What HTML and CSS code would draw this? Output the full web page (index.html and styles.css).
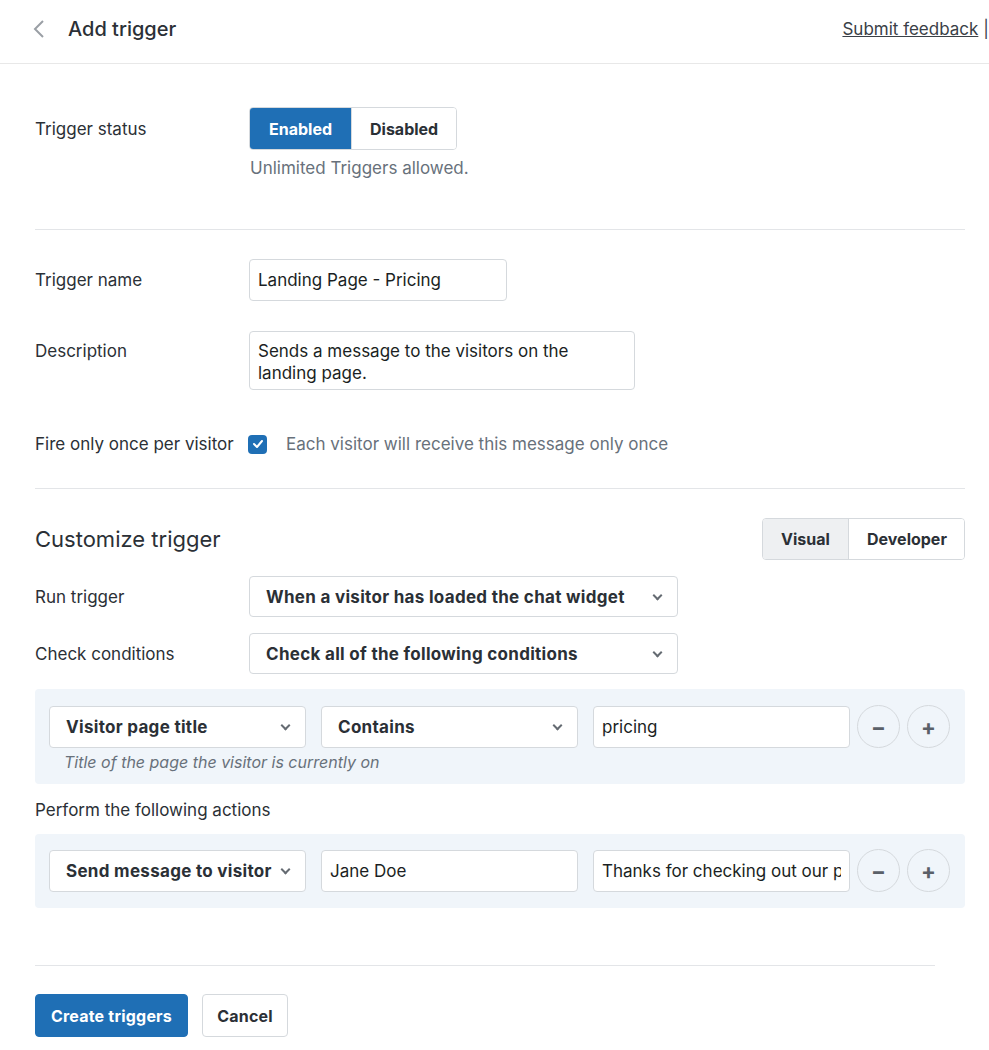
FILE: index.html
```html
<!DOCTYPE html>
<html lang="en">
<head>
    <meta charset="UTF-8">
    <meta name="viewport" content="width=device-width, initial-scale=1.0">
    <title>Add trigger</title>
    <link rel="stylesheet" href="styles.css">
</head>
<body>
<header class="topbar">
    <div class="topbar-left">
        <a class="back-link" href="#">
            <svg width="14" height="20" viewBox="0 0 14 20"><polyline points="11,2 3,10 11,18" fill="none" stroke="#9a9fa5" stroke-width="2"/></svg>
        </a>
        <h1 class="page-title">Add trigger</h1>
    </div>
    <div class="topbar-right">
        <a class="feedback-link" href="#">Submit feedback</a>
        <span class="divider">|</span>
    </div>
</header>

<main class="content">
    <section class="section section-status">
        <div class="field">
            <label class="field-label">Trigger status</label>
            <div class="btn-group">
                <button class="seg-btn seg-btn-primary">Enabled</button>
                <button class="seg-btn">Disabled</button>
            </div>
        </div>
        <div class="field-hint-row">
            <p class="hint">Unlimited Triggers allowed.</p>
        </div>
    </section>

    <section class="section section-details">
        <div class="field">
            <label class="field-label" for="trigger-name">Trigger name</label>
            <input class="text-input name-input" id="trigger-name" type="text" value="Landing Page - Pricing">
        </div>
        <div class="field field-top">
            <label class="field-label" for="description">Description</label>
            <div class="text-input textarea" id="description">Sends a message to the visitors on the landing page.</div>
        </div>
        <div class="field field-check">
            <label class="field-label">Fire only once per visitor</label>
            <div class="check-row">
                <span class="checkbox">
                    <svg width="12" height="10" viewBox="0 0 12 10"><polyline points="2,5 5,8 10,2" fill="none" stroke="#fff" stroke-width="2" stroke-linecap="round" stroke-linejoin="round"/></svg>
                </span>
                <span class="check-text">Each visitor will receive this message only once</span>
            </div>
        </div>
    </section>

    <section class="section section-customize">
        <div class="customize-head">
            <h2 class="section-title">Customize trigger</h2>
            <div class="btn-group">
                <button class="seg-btn seg-btn-small seg-btn-active">Visual</button>
                <button class="seg-btn seg-btn-small seg-btn-wide">Developer</button>
            </div>
        </div>
        <div class="field field-compact">
            <label class="field-label">Run trigger</label>
            <div class="select wide-select">When a visitor has loaded the chat widget</div>
        </div>
        <div class="field field-compact">
            <label class="field-label">Check conditions</label>
            <div class="select wide-select">Check all of the following conditions</div>
        </div>

        <div class="rule-box">
            <div class="rule-row">
                <div class="select rule-cell">Visitor page title</div>
                <div class="select rule-cell">Contains</div>
                <input class="text-input rule-cell" type="text" value="pricing">
                <button class="round-btn">&minus;</button>
                <button class="round-btn">+</button>
            </div>
            <p class="rule-hint">Title of the page the visitor is currently on</p>
        </div>

        <p class="sub-label">Perform the following actions</p>

        <div class="rule-box rule-box-actions">
            <div class="rule-row">
                <div class="select rule-cell">Send message to visitor</div>
                <input class="text-input rule-cell" type="text" value="Jane Doe">
                <input class="text-input rule-cell" type="text" value="Thanks for checking out our pricing page!">
                <button class="round-btn">&minus;</button>
                <button class="round-btn">+</button>
            </div>
        </div>
    </section>

    <footer class="form-actions">
        <button class="btn btn-primary">Create triggers</button>
        <button class="btn btn-default">Cancel</button>
    </footer>
</main>
</body>
</html>
```

FILE: styles.css
```css
* {
    box-sizing: border-box;
}
body {
    font-family: Inter, "Liberation Sans", Arial, sans-serif;
    color: #2b3036;
    background: #fff;
    margin: 0;
    padding: 0;
    font-size: 17px;
}
button, input {
    font-family: inherit;
}

/* top bar */
.topbar {
    height: 64px;
    border-bottom: 1px solid #e8e8e8;
    display: flex;
    justify-content: space-between;
    align-items: center;
    padding: 0 0 6px 32px;
}
.topbar-left {
    display: flex;
    align-items: center;
}
.back-link {
    display: flex;
    width: 36px;
}
.page-title {
    margin: 0;
    font-size: 20px;
    font-weight: 500;
    color: #2b3036;
}
.topbar-right {
    display: flex;
    align-items: center;
    gap: 5px;
    font-size: 17px;
    color: #3a4047;
}
.feedback-link {
    color: #3a4047;
    text-decoration: underline;
}

/* main form */
.content {
    padding: 0 24px 0 35px;
}
.section {
    border-bottom: 1px solid #e3e5e8;
}
.section-status {
    padding: 43px 0 50px;
}
.section-details {
    padding: 29px 0 34px;
}
.section-customize {
    padding: 29px 0 57px;
    border-bottom: none;
}
.field {
    display: grid;
    grid-template-columns: 214px auto;
    align-items: center;
    justify-items: start;
    line-height: 20px;
}
.field + .field {
    margin-top: 30px;
}
.field-top .field-label {
    align-self: start;
    margin-top: 10px;
}
.section-details .field-check {
    margin-top: 44px;
}
.field-label {
    color: #2b3036;
}
.field-hint-row {
    padding-left: 214px;
}
.hint {
    margin: 7px 0 0 1px;
    color: #68717b;
    line-height: 22px;
}

/* segmented buttons */
.btn-group {
    display: flex;
    border: 1px solid #d5d9dd;
    border-radius: 4px;
    overflow: hidden;
}
.seg-btn {
    height: 41px;
    border: none;
    background: #fff;
    color: #2b3036;
    font-size: 16px;
    font-weight: 700;
    padding: 0 18px;
    cursor: pointer;
}
.seg-btn-small {
    height: 40px;
}
.seg-btn + .seg-btn {
    border-left: 1px solid #d5d9dd;
}
.seg-btn-primary {
    background: #1f6fb5;
    color: #fff;
    width: 101px;
}
.seg-btn-active {
    background: #eef0f2;
    width: 85px;
}
.seg-btn-wide {
    width: 116px;
}

/* inputs */
.text-input {
    height: 42px;
    border: 1px solid #d5d9dd;
    border-radius: 4px;
    padding: 0 8px;
    font-size: 17px;
    color: #1b1f23;
    background: #fff;
}
.name-input {
    width: 258px;
}
.textarea {
    width: 386px;
    height: 59px;
    padding: 8px 8px;
    line-height: 22px;
}

.check-row {
    display: flex;
    align-items: center;
    gap: 19px;
    margin-left: -1px;
}
.checkbox {
    width: 19px;
    height: 19px;
    border-radius: 4px;
    background: #1f6fb5;
    display: flex;
    align-items: center;
    justify-content: center;
}
.check-text {
    color: #68717b;
}

/* customize */
.customize-head {
    display: flex;
    justify-content: space-between;
    align-items: center;
}
.section-title {
    margin: 0;
    font-size: 22px;
    font-weight: 400;
    color: #2b3036;
}
.customize-head + .field {
    margin-top: 16px;
}
.field-compact + .field-compact {
    margin-top: 16px;
}
.select {
    height: 42px;
    border: 1px solid #d5d9dd;
    border-radius: 4px;
    background: #fff;
    display: flex;
    align-items: center;
    padding: 0 36px 0 16px;
    font-weight: 700;
    font-size: 17px;
    letter-spacing: 0.3px;
    color: #2b3036;
    position: relative;
    white-space: nowrap;
}
.select::after {
    content: "";
    position: absolute;
    right: 16px;
    top: 50%;
    margin-top: -5px;
    width: 5px;
    height: 5px;
    border-right: 2px solid #656b72;
    border-bottom: 2px solid #656b72;
    transform: rotate(45deg);
}
.wide-select {
    width: 429px;
    height: 41px;
}

.rule-box {
    margin-top: 15px;
    background: #f0f5fa;
    border-radius: 4px;
    padding: 16px 14px 12px;
}
.rule-box-actions {
    margin-top: 14px;
    padding: 15px 14px 16px;
}
.rule-row {
    display: flex;
    align-items: center;
    gap: 15px;
}
.rule-cell {
    width: 257px;
    flex: none;
}
input.rule-cell {
    padding: 0 8px;
    overflow: hidden;
}
.round-btn {
    width: 43px;
    height: 43px;
    border-radius: 50%;
    border: 1px solid #d5d9dd;
    background: #f0f5fa;
    color: #5a6068;
    font-size: 22px;
    font-weight: 700;
    line-height: 1;
    padding: 0;
    flex: none;
    cursor: pointer;
}
.round-btn + .round-btn {
    margin-left: -8px;
}
.rule-row .round-btn:first-of-type {
    margin-left: -8px;
}
.rule-hint {
    margin: 4px 0 0 15px;
    font-style: italic;
    font-size: 16px;
    line-height: 20px;
    color: #68717b;
}
.sub-label {
    margin: 16px 0 0;
    line-height: 20px;
}

/* footer buttons */
.form-actions {
    border-top: 1px solid #e3e5e8;
    margin-right: 30px;
    padding-top: 28px;
    display: flex;
    gap: 14px;
}
.btn {
    height: 43px;
    border-radius: 4px;
    font-size: 16px;
    font-weight: 700;
    letter-spacing: 0.2px;
    padding: 0 12px;
    cursor: pointer;
}
.btn-primary {
    background: #1f6fb5;
    border: 1px solid #1f6fb5;
    color: #fff;
    width: 153px;
}
.btn-default {
    background: #fff;
    border: 1px solid #d5d9dd;
    color: #2b3036;
    width: 86px;
}
```
